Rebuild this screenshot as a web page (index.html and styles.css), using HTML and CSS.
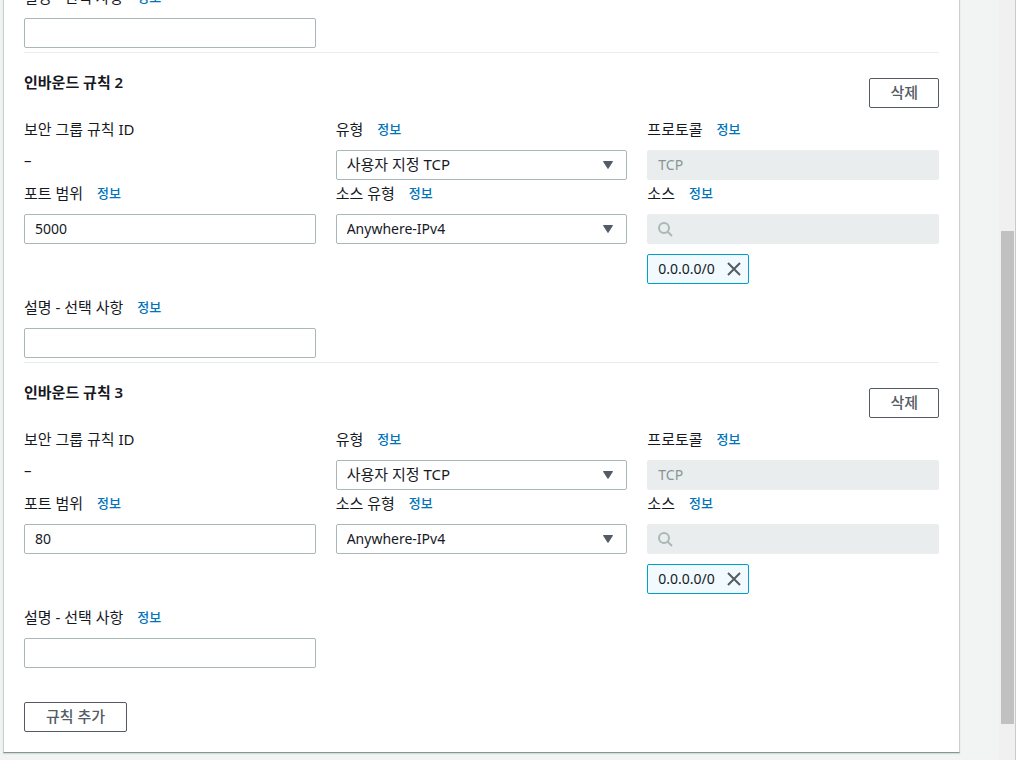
FILE: index.html
```html
<!DOCTYPE html>
<html lang="ko">
<head>
<meta charset="utf-8">
<title>인바운드 규칙</title>
<link rel="stylesheet" href="styles.css">
</head>
<body>
<div class="window">
  <main class="page">
    <form class="card">
      <section class="rule">
        <div class="fields">
          <div class="field">
            <div class="label-row"><label for="desc1">설명 - 선택 사항</label><a class="info" href="#">정보</a></div>
            <input class="control" id="desc1" type="text">
          </div>
        </div>
      </section>

      <section class="rule">
        <header class="rule-header">
          <h2 class="rule-title">인바운드 규칙 2</h2>
          <button class="button" type="button">삭제</button>
        </header>
        <div class="fields">
          <div class="field">
            <div class="label-row"><span>보안 그룹 규칙 ID</span></div>
            <div class="value">–</div>
          </div>
          <div class="field">
            <div class="label-row"><label for="type2">유형</label><a class="info" href="#">정보</a></div>
            <div class="select-wrap">
              <select class="control select hangul" id="type2"><option>사용자 지정 TCP</option></select>
              <svg class="caret" viewBox="0 0 12 10" aria-hidden="true"><path d="M1.5 1.5h9L6 8.5z"/></svg>
            </div>
          </div>
          <div class="field">
            <div class="label-row"><label for="proto2">프로토콜</label><a class="info" href="#">정보</a></div>
            <input class="control" id="proto2" type="text" value="TCP" disabled>
          </div>
          <div class="field">
            <div class="label-row"><label for="port2">포트 범위</label><a class="info" href="#">정보</a></div>
            <input class="control" id="port2" type="text" value="5000">
          </div>
          <div class="field">
            <div class="label-row"><label for="srctype2">소스 유형</label><a class="info" href="#">정보</a></div>
            <div class="select-wrap">
              <select class="control select" id="srctype2"><option>Anywhere-IPv4</option></select>
              <svg class="caret" viewBox="0 0 12 10" aria-hidden="true"><path d="M1.5 1.5h9L6 8.5z"/></svg>
            </div>
          </div>
          <div class="field">
            <div class="label-row"><label for="src2">소스</label><a class="info" href="#">정보</a></div>
            <div class="search-wrap">
              <input class="control" id="src2" type="text" disabled>
              <svg class="search-icon" viewBox="0 0 16 16" aria-hidden="true"><circle cx="7" cy="7" r="5"/><path d="M10.5 10.5L15 15"/></svg>
            </div>
            <div class="token"><span>0.0.0.0/0</span><button class="token-remove" type="button" aria-label="삭제"><svg viewBox="0 0 14 14" aria-hidden="true"><path d="M1 1l12 12M13 1L1 13"/></svg></button></div>
          </div>
          <div class="field">
            <div class="label-row"><label for="desc2">설명 - 선택 사항</label><a class="info" href="#">정보</a></div>
            <input class="control" id="desc2" type="text">
          </div>
        </div>
      </section>

      <section class="rule">
        <header class="rule-header">
          <h2 class="rule-title">인바운드 규칙 3</h2>
          <button class="button" type="button">삭제</button>
        </header>
        <div class="fields">
          <div class="field">
            <div class="label-row"><span>보안 그룹 규칙 ID</span></div>
            <div class="value">–</div>
          </div>
          <div class="field">
            <div class="label-row"><label for="type3">유형</label><a class="info" href="#">정보</a></div>
            <div class="select-wrap">
              <select class="control select hangul" id="type3"><option>사용자 지정 TCP</option></select>
              <svg class="caret" viewBox="0 0 12 10" aria-hidden="true"><path d="M1.5 1.5h9L6 8.5z"/></svg>
            </div>
          </div>
          <div class="field">
            <div class="label-row"><label for="proto3">프로토콜</label><a class="info" href="#">정보</a></div>
            <input class="control" id="proto3" type="text" value="TCP" disabled>
          </div>
          <div class="field">
            <div class="label-row"><label for="port3">포트 범위</label><a class="info" href="#">정보</a></div>
            <input class="control" id="port3" type="text" value="80">
          </div>
          <div class="field">
            <div class="label-row"><label for="srctype3">소스 유형</label><a class="info" href="#">정보</a></div>
            <div class="select-wrap">
              <select class="control select" id="srctype3"><option>Anywhere-IPv4</option></select>
              <svg class="caret" viewBox="0 0 12 10" aria-hidden="true"><path d="M1.5 1.5h9L6 8.5z"/></svg>
            </div>
          </div>
          <div class="field">
            <div class="label-row"><label for="src3">소스</label><a class="info" href="#">정보</a></div>
            <div class="search-wrap">
              <input class="control" id="src3" type="text" disabled>
              <svg class="search-icon" viewBox="0 0 16 16" aria-hidden="true"><circle cx="7" cy="7" r="5"/><path d="M10.5 10.5L15 15"/></svg>
            </div>
            <div class="token"><span>0.0.0.0/0</span><button class="token-remove" type="button" aria-label="삭제"><svg viewBox="0 0 14 14" aria-hidden="true"><path d="M1 1l12 12M13 1L1 13"/></svg></button></div>
          </div>
          <div class="field">
            <div class="label-row"><label for="desc3">설명 - 선택 사항</label><a class="info" href="#">정보</a></div>
            <input class="control" id="desc3" type="text">
          </div>
        </div>
      </section>

      <button class="button add-button" type="button">규칙 추가</button>
    </form>
  </main>
  <div class="scrollbar" aria-hidden="true"><div class="thumb"></div></div>
</div>
</body>
</html>
```
FILE: styles.css
```css
* { box-sizing: border-box; }

body {
  margin: 0;
  background: #fff;
  color: #16191f;
  font: 15px/20px "Noto Sans", "Noto Sans CJK KR", sans-serif;
}

button, input, select { font: inherit; color: inherit; }

.window {
  display: flex;
  height: 100vh;
  margin-right: 16px;
  overflow: hidden;
  background: #f2f3f3;
  border-right: 1px solid #c8cacb;
}

/* The form is scrolled to its end, so it is aligned to the bottom edge. */
.page {
  flex: 1;
  min-width: 0;
  display: flex;
  flex-direction: column;
  justify-content: flex-end;
  padding: 0 39px 7px 3px;
}

.card {
  flex: none;
  padding: 20px;
  background: #fff;
  border: 1px solid #c9cecf;
  border-bottom-color: #879596;
  box-shadow: 0 1px 1px #d5dbdb;
}

.rule + .rule {
  margin-top: 4px;
  border-top: 1px solid #eaeded;
}

.rule-header {
  display: flex;
  justify-content: space-between;
  align-items: flex-end;
  padding: 20px 0 12px;
}

.rule-title {
  align-self: flex-start;
  margin: 0;
  font-size: 15px;
  font-weight: 600;
  line-height: 18px;
}

.button {
  height: 30px;
  margin-top: 5px;
  padding: 0 20px 2px;
  background: #fff;
  border: 1px solid #545b64;
  border-radius: 2px;
  color: #545b64;
  font-weight: 500;
  line-height: 20px;
}

.add-button {
  margin-top: 34px;
  padding-left: 21px;
  padding-right: 21px;
}

.fields {
  display: grid;
  grid-template-columns: repeat(3, minmax(0, 1fr));
  gap: 4px 20px;
}

.label-row {
  display: flex;
  gap: 14px;
  height: 20px;
  margin-bottom: 10px;
  line-height: 18px;
}

.info {
  color: #0073bb;
  font-size: 13px;
  font-weight: 500;
  text-decoration: none;
}

.value { line-height: 20px; }

.control {
  display: block;
  width: 100%;
  height: 30px;
  padding: 0 10px 2px;
  background: #fff;
  border: 1px solid #aab7b8;
  border-radius: 2px;
  font-size: 14px;
}

.control:disabled {
  background: #eaeded;
  border-color: #eaeded;
  color: #879596;
}

.select {
  appearance: none;
  padding: 0 32px 0 10px;
}

.hangul {
  padding-bottom: 2px;
  font-size: 15px;
}

.select-wrap, .search-wrap { position: relative; }

.caret {
  position: absolute;
  top: 10px;
  right: 13px;
  width: 12px;
  height: 10px;
  fill: #545b64;
  stroke: #545b64;
  stroke-linejoin: round;
  pointer-events: none;
}

.search-icon {
  position: absolute;
  top: 7px;
  left: 10px;
  width: 16px;
  height: 16px;
  fill: none;
  stroke: #aab7b8;
  stroke-width: 2;
}

.token {
  display: inline-flex;
  align-items: center;
  gap: 12px;
  height: 30px;
  margin: 10px 0;
  padding: 0 7px 0 10px;
  background: #f1faff;
  border: 1px solid #00a1c9;
  border-radius: 2px;
  font-size: 14px;
  vertical-align: top;
}

.token-remove {
  display: flex;
  padding: 0;
  background: none;
  border: 0;
}

.token-remove svg {
  width: 14px;
  height: 14px;
  fill: none;
  stroke: #545b64;
  stroke-width: 2;
}

.scrollbar {
  width: 16px;
  padding: 0 1px 0 2px;
  background: #f0f0f0;
}

.thumb {
  position: relative;
  top: 30.4%;
  height: 64.9%;
  background: #c1c1c1;
}
```
